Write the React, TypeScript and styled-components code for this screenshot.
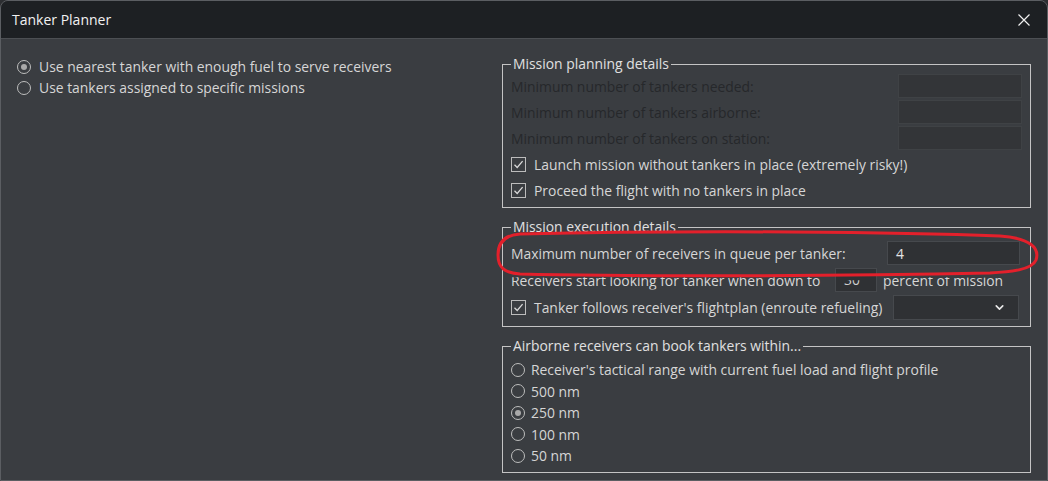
import React from 'react';
import styled, { createGlobalStyle } from 'styled-components';
import { ChevronDown } from 'lucide-react';

const GlobalStyle = createGlobalStyle`
  html, body {
    margin: 0;
    padding: 0;
    background: #2c2e31;
  }
  body {
    font-family: "Open Sans", "Noto Sans", sans-serif;
  }
`;

const Window = styled.div`
  position: relative;
  width: 1046px;
  height: 479px;
  border: 1px solid #5b5e62;
  border-radius: 8px 8px 0 0;
  overflow: hidden;
  background: #3a3d41;
  display: flex;
  flex-direction: column;
  color: #d6d6d6;
  font-size: 13.9px;
`;

const TitleBar = styled.div`
  height: 37px;
  flex-shrink: 0;
  background: #1d2023;
  border-bottom: 1px solid #4c4f53;
  display: flex;
  align-items: center;
  justify-content: space-between;
  padding: 0 17px 0 11px;
`;

const Title = styled.span`
  color: #f2f2f2;
  font-size: 14px;
`;

const Body = styled.div`
  flex: 1;
  display: grid;
  grid-template-columns: 1fr 529px;
  padding: 16px 16px 0 16px;
`;

const LeftColumn = styled.div`
  display: flex;
  flex-direction: column;
  padding-top: 1px;
`;

const RightColumn = styled.div`
  display: flex;
  flex-direction: column;
  gap: 10px;
`;

const Group = styled.fieldset<{ $pt: number; $pb: number }>`
  margin: 0;
  min-width: 0;
  border: 1px solid #c4c4c4;
  padding: ${(p) => p.$pt}px 8px ${(p) => p.$pb}px 8px;
`;

const Legend = styled.legend`
  padding: 0 2px;
  color: #e0e0e0;
  line-height: 18px;
`;

const OptionRow = styled.label<{ $h: number; $gap: number }>`
  display: flex;
  align-items: center;
  height: ${(p) => p.$h}px;
  gap: ${(p) => p.$gap}px;
  white-space: nowrap;
`;

const RadioCircle = styled.span<{ $checked?: boolean }>`
  position: relative;
  width: 12px;
  height: 12px;
  border: 1px solid #bdbdbd;
  border-radius: 50%;
  flex-shrink: 0;

  &::after {
    content: '';
    display: ${(p) => (p.$checked ? 'block' : 'none')};
    position: absolute;
    left: 3px;
    top: 3px;
    width: 6px;
    height: 6px;
    border-radius: 50%;
    background: #a9a9a9;
  }
`;

const CheckBox = styled.span`
  width: 13px;
  height: 13px;
  border: 1px solid #bcbcbc;
  flex-shrink: 0;
  display: flex;
  align-items: center;
  justify-content: center;
`;

const FieldRow = styled.div<{ $h: number }>`
  display: flex;
  align-items: center;
  height: ${(p) => p.$h}px;
  white-space: nowrap;
`;

const FieldLabel = styled.span<{ $disabled?: boolean; $width?: number; $clipped?: boolean; $ml?: number }>`
  display: inline-block;
  color: ${(p) => (p.$disabled ? '#26282b' : '#d6d6d6')};
  width: ${(p) => (p.$width ? `${p.$width}px` : 'auto')};
  margin-left: ${(p) => p.$ml ?? 0}px;
  flex-shrink: 0;
  clip-path: ${(p) => (p.$clipped ? 'inset(36% 0 0 0)' : 'none')};
`;

const TextBox = styled.div<{ $w: number; $ml?: string; $mr?: number; $disabled?: boolean }>`
  box-sizing: border-box;
  width: ${(p) => p.$w}px;
  height: 24px;
  margin-left: ${(p) => p.$ml ?? '0'};
  margin-right: ${(p) => p.$mr ?? 0}px;
  background: ${(p) => (p.$disabled ? '#333538' : '#2f3134')};
  border: 1px solid ${(p) => (p.$disabled ? '#3f4245' : '#46494d')};
  display: flex;
  align-items: center;
  padding: 0 8px;
  color: #e4e4e4;
  flex-shrink: 0;
`;

const ClippedValue = styled.span`
  display: block;
  line-height: 16px;
  clip-path: inset(52% 0 0 0);
  color: #cfcfcf;
`;

const Dropdown = styled.div`
  box-sizing: border-box;
  width: 126px;
  height: 25px;
  margin-left: auto;
  margin-right: 3px;
  background: #2f3134;
  border: 1px solid #46494d;
  display: flex;
  align-items: center;
  justify-content: flex-end;
  padding-right: 12px;
  color: #e8e8e8;
`;

const Annotation = styled.svg`
  position: absolute;
  left: -1px;
  top: -1px;
  width: 1048px;
  height: 481px;
  pointer-events: none;
`;

const Radio = ({ checked, label, h, gap }: { checked?: boolean; label: string; h: number; gap: number }) => (
  <OptionRow $h={h} $gap={gap}>
    <RadioCircle $checked={checked} />
    <span>{label}</span>
  </OptionRow>
);

const Check = ({ label, h }: { label: string; h: number }) => (
  <OptionRow $h={h} $gap={8}>
    <CheckBox>
      <svg width="11" height="11" viewBox="0 0 11 11">
        <path d="M1.5 5.8 L4.2 8.5 L9.6 2.2" fill="none" stroke="#d8d8d8" strokeWidth="1.3" />
      </svg>
    </CheckBox>
    <span>{label}</span>
  </OptionRow>
);

const App = () => {
  return (
    <>
      <GlobalStyle />
      <Window>
        <TitleBar>
          <Title>Tanker Planner</Title>
          <svg width="12" height="12" viewBox="0 0 12 12">
            <path d="M0.5 0.5 L11.5 11.5 M11.5 0.5 L0.5 11.5" stroke="#f0f0f0" strokeWidth="1.2" />
          </svg>
        </TitleBar>
        <Body>
          <LeftColumn>
            <Radio checked h={21} gap={8} label="Use nearest tanker with enough fuel to serve receivers" />
            <Radio h={21} gap={8} label="Use tankers assigned to specific missions" />
          </LeftColumn>

          <RightColumn>
            <Group $pt={0} $pb={4}>
              <Legend>Mission planning details</Legend>
              <FieldRow $h={26}>
                <FieldLabel $disabled>Minimum number of tankers needed:</FieldLabel>
                <TextBox $disabled $w={124} $ml="auto" />
              </FieldRow>
              <FieldRow $h={26}>
                <FieldLabel $disabled>Minimum number of tankers airborne:</FieldLabel>
                <TextBox $disabled $w={124} $ml="auto" />
              </FieldRow>
              <FieldRow $h={26}>
                <FieldLabel $disabled>Minimum number of tankers on station:</FieldLabel>
                <TextBox $disabled $w={124} $ml="auto" />
              </FieldRow>
              <Check h={26} label="Launch mission without tankers in place (extremely risky!)" />
              <Check h={26} label="Proceed the flight with no tankers in place" />
            </Group>

            <Group $pt={3} $pb={5}>
              <Legend>Mission execution details</Legend>
              <FieldRow $h={28}>
                <FieldLabel>Maximum number of receivers in queue per tanker:</FieldLabel>
                <TextBox $w={133} $ml="auto" $mr={2}>4</TextBox>
              </FieldRow>
              <FieldRow $h={26}>
                <FieldLabel $clipped $width={324}>Receivers start looking for tanker when down to</FieldLabel>
                <TextBox $w={42}>
                  <ClippedValue>30</ClippedValue>
                </TextBox>
                <FieldLabel $clipped $ml={6}>percent of mission</FieldLabel>
              </FieldRow>
              <FieldRow $h={28}>
                <Check h={28} label="Tanker follows receiver's flightplan (enroute refueling)" />
                <Dropdown>
                  <ChevronDown size={13} strokeWidth={3} />
                </Dropdown>
              </FieldRow>
            </Group>

            <Group $pt={4} $pb={5}>
              <Legend>Airborne receivers can book tankers within...</Legend>
              <Radio h={21.5} gap={6} label="Receiver's tactical range with current fuel load and flight profile" />
              <Radio h={21.5} gap={6} label="500 nm" />
              <Radio checked h={21.5} gap={6} label="250 nm" />
              <Radio h={21.5} gap={6} label="100 nm" />
              <Radio h={21.5} gap={6} label="50 nm" />
            </Group>
          </RightColumn>
        </Body>

        <Annotation viewBox="0 0 1048 481">
          <path
            d="M520 234 C700 230 900 232 1000 236 C1030 238 1040 248 1036 260 C1032 270 1010 272 990 273 C800 277 600 276 520 274 C505 273 498 268 498 255 C498 242 505 235 520 234 Z"
            fill="none"
            stroke="#e3202b"
            strokeWidth="3"
          />
        </Annotation>
      </Window>
    </>
  );
};

export default App;
